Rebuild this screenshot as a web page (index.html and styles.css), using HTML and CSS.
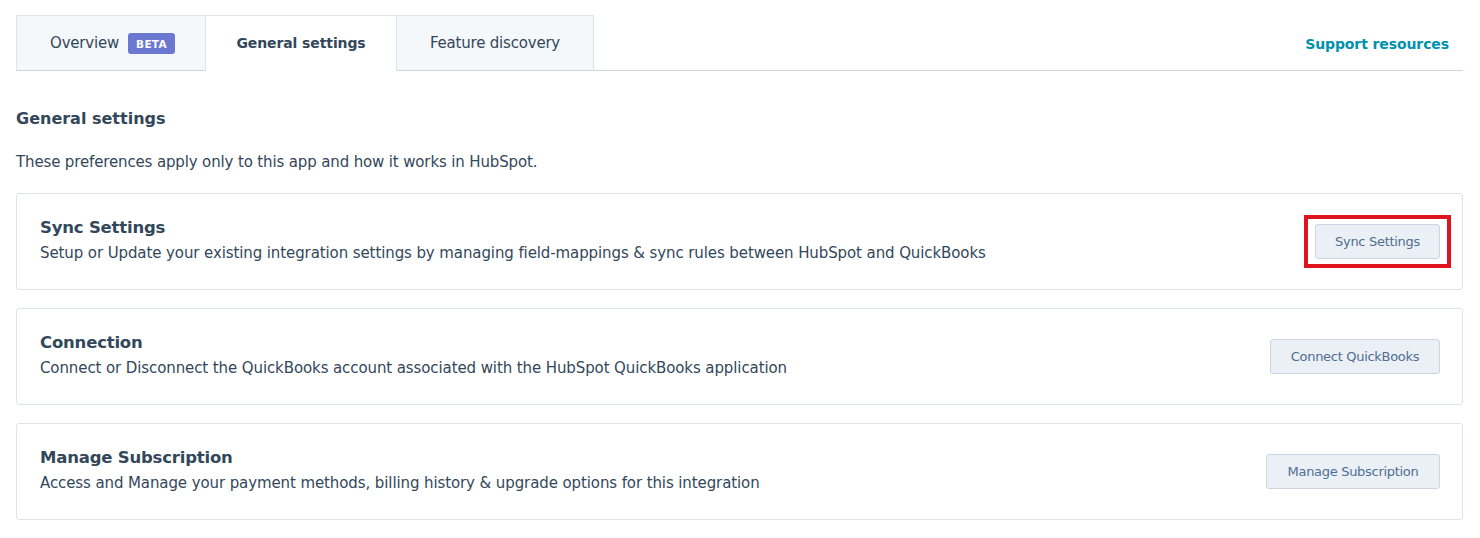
FILE: index.html
```html
<!DOCTYPE html>
<html>
<head>
<meta charset="utf-8">
<link rel="stylesheet" href="styles.css">
</head>
<body>
<div class="page">
  <div class="tabbar">
    <div class="tabs">
      <div class="tab tab-1">Overview <span class="badge">BETA</span></div>
      <div class="tab tab-2 active">General settings</div>
      <div class="tab tab-3">Feature discovery</div>
    </div>
    <a class="support">Support resources</a>
  </div>

  <h2 class="heading">General settings</h2>
  <p class="intro">These preferences apply only to this app and how it works in HubSpot.</p>

  <div class="card">
    <div class="card-text">
      <div class="card-title">Sync Settings</div>
      <div class="card-desc">Setup or Update your existing integration settings by managing field-mappings &amp; sync rules between HubSpot and QuickBooks</div>
    </div>
    <span class="highlight"><button class="btn btn-sync">Sync Settings</button></span>
  </div>

  <div class="card">
    <div class="card-text">
      <div class="card-title">Connection</div>
      <div class="card-desc">Connect or Disconnect the QuickBooks account associated with the HubSpot QuickBooks application</div>
    </div>
    <button class="btn btn-connect">Connect QuickBooks</button>
  </div>

  <div class="card">
    <div class="card-text">
      <div class="card-title">Manage Subscription</div>
      <div class="card-desc">Access and Manage your payment methods, billing history &amp; upgrade options for this integration</div>
    </div>
    <button class="btn btn-manage">Manage Subscription</button>
  </div>
</div>
</body>
</html>
```

FILE: styles.css
```css
html, body {
  margin: 0;
  padding: 0;
  background: #ffffff;
}
body {
  font-family: "DejaVu Sans", "Open Sans", sans-serif;
  color: #33475b;
}
.page {
  padding: 15px 17px 0 16px;
}
.tabbar {
  display: flex;
  align-items: center;
  justify-content: space-between;
  border-bottom: 1px solid #cbd6e2;
  height: 55px;
}
.tabs {
  display: flex;
  height: 56px;
  align-self: flex-start;
}
.tab {
  box-sizing: border-box;
  height: 56px;
  display: flex;
  align-items: center;
  justify-content: center;
  font-size: 15px;
  color: #33475b;
  background: #f5f8fa;
  border: 1px solid #dfe3eb;
  border-bottom: 1px solid #cbd6e2;
  letter-spacing: -0.2px;
}
.tab + .tab {
  border-left: none;
}
.tab-1 { width: 190px; padding-left: 3px; }
.tab-2 { width: 191px; }
.tab-3 { width: 197px; }
.tab.active {
  background: #ffffff;
  border-bottom-color: #ffffff;
  font-weight: 700;
  font-size: 14px;
  letter-spacing: -0.1px;
}
.badge {
  display: inline-block;
  margin-left: 9px;
  background: #6a78d1;
  color: #ffffff;
  font-size: 10.5px;
  font-weight: 700;
  letter-spacing: 0.3px;
  padding: 5px 8px 4px;
  border-radius: 3px;
  line-height: 12px;
}
.support {
  color: #0091ae;
  font-weight: 700;
  font-size: 14px;
  margin-right: 14px;
  margin-top: 2px;
  letter-spacing: -0.1px;
}
.heading {
  margin: 36px 0 0 0;
  font-size: 16px;
  font-weight: 700;
  line-height: 24px;
  letter-spacing: 0;
}
.intro {
  margin: 19px 0 19px 0;
  font-size: 15px;
  line-height: 24px;
  letter-spacing: -0.14px;
}
.card {
  box-sizing: border-box;
  height: 97px;
  border: 1px solid #dfe3eb;
  border-radius: 3px;
  display: flex;
  align-items: center;
  justify-content: space-between;
  padding: 0 22px 0 23px;
  margin-bottom: 18px;
}
.card-text {
  padding-bottom: 3px;
}
.card-title {
  font-size: 16.5px;
  font-weight: 700;
  line-height: 24px;
  letter-spacing: -0.2px;
}
.card-desc {
  font-size: 15px;
  line-height: 24px;
  margin-top: 1px;
  letter-spacing: -0.1px;
}
.btn {
  box-sizing: border-box;
  height: 35px;
  background: #eaf0f6;
  border: 1px solid #cbd6e2;
  border-radius: 3px;
  color: #506e91;
  font-family: inherit;
  font-size: 13px;
  letter-spacing: -0.3px;
  padding: 0;
}
.btn-sync { width: 125px; }
.btn-connect { width: 170px; }
.btn-manage { width: 174px; }
.highlight {
  display: inline-flex;
  border: 4px solid #e0141e;
  padding: 5px 7px;
  margin: -9px -11px;
}
```
